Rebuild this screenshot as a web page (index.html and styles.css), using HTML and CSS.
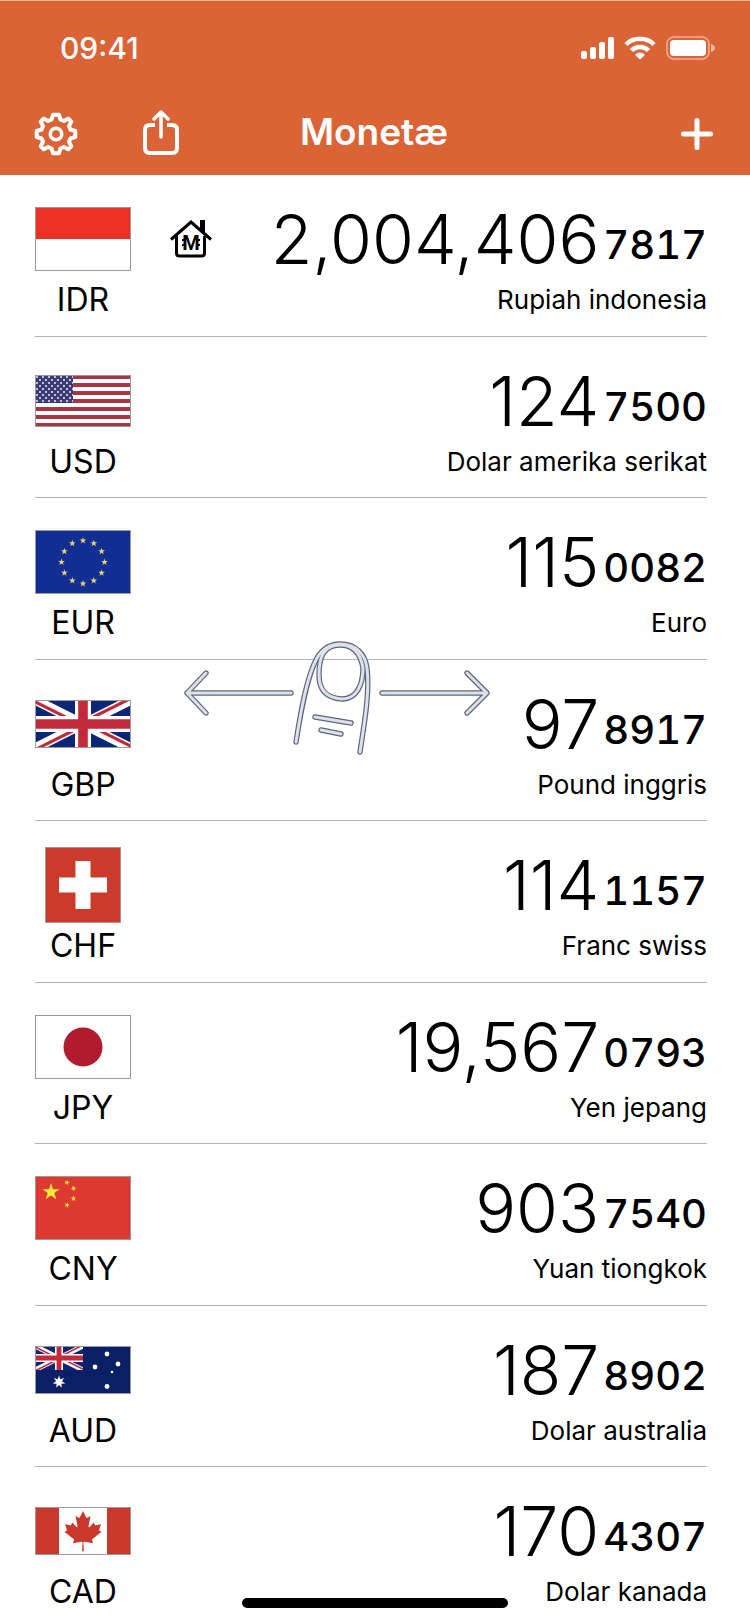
FILE: index.html
```html
<!DOCTYPE html>
<html lang="id">
<head>
    <meta charset="UTF-8">
    <meta name="viewport" content="width=device-width, initial-scale=1.0">
    <title>Monetæ</title>
    <link rel="stylesheet" href="styles.css">
</head>
<body>
    <!-- shared flag parts -->
    <svg class="defs" aria-hidden="true">
        <defs>
            <path id="star" d="M0-10 2.25-3.09 9.51-3.09 3.63 1.18 5.88 8.09 0 3.82-5.88 8.09-3.63 1.18-9.51-3.09-2.25-3.09z"/>
            <symbol id="jack" viewBox="0 0 60 30">
                <clipPath id="jack-clip"><path d="M30 15h30v15zv15H0zH0V0zV0h30z"/></clipPath>
                <path fill="#0b2677" d="M0 0h60v30H0z"/>
                <path stroke="#fff" stroke-width="6" d="M0 0l60 30M60 0L0 30"/>
                <path stroke="#c22a3c" stroke-width="4" clip-path="url(#jack-clip)" d="M0 0l60 30M60 0L0 30"/>
                <path stroke="#fff" stroke-width="10" d="M30 0v30M0 15h60"/>
                <path stroke="#c22a3c" stroke-width="6" d="M30 0v30M0 15h60"/>
            </symbol>
            <pattern id="us-stars" width="6" height="6" patternUnits="userSpaceOnUse">
                <circle cx="2" cy="2" r="0.9" fill="#fff"/>
                <circle cx="5" cy="5" r="0.9" fill="#fff"/>
            </pattern>
        </defs>
    </svg>

    <header class="header">
        <div class="status-bar">
            <span class="time">09:41</span>
            <div class="status-icons">
                <svg width="34" height="24" viewBox="0 0 34 24" fill="#fff">
                    <rect x="1" y="15" width="6" height="8" rx="2"/>
                    <rect x="10" y="11" width="6" height="12" rx="2"/>
                    <rect x="19" y="6" width="6" height="17" rx="2"/>
                    <rect x="28" y="1" width="6" height="22" rx="2"/>
                </svg>
                <svg width="32" height="24" viewBox="0 0 32 24" fill="none" stroke="#fff" stroke-width="4.5">
                    <path d="M2 8.500a20 20 0 0 1 28 0"/>
                    <path d="M7.500 14.500a12 12 0 0 1 17 0"/>
                    <path fill="#fff" stroke="none" d="M11.500 18.300a6.500 6.500 0 0 1 9 0q.4.500 0 1L16.700 23q-.7.500-1.400 0l-3.800-3.700q-.4-.500 0-1z"/>
                </svg>
                <svg class="battery" width="50" height="24" viewBox="0 0 50 24">
                    <rect x="1" y="1" width="42" height="22" rx="7" fill="none" stroke="#efb198" stroke-width="1.500"/>
                    <rect x="4" y="4" width="36" height="16" rx="4" fill="#fff"/>
                    <path fill="#efb198" d="M45 8q4 1.500 4 4t-4 4z"/>
                </svg>
            </div>
        </div>
        <nav class="nav-bar">
            <div class="nav-left">
                <button class="icon-btn" type="button" aria-label="Pengaturan">
                    <svg width="44" height="44" viewBox="-22 -22 44 44" fill="none" stroke="#fff" stroke-width="4" stroke-linejoin="round">
                        <path d="M-4.400-14.500-3-19.300H3L4.400-14.500 7.800-13 12.300-15.300 15.300-12.300 13-7.800 14.500-4.400 19.300-3V3L14.500 4.400 13 7.800 15.300 12.300 12.300 15.300 7.800 13 4.400 14.500 3 19.300H-3L-4.400 14.500-7.800 13-12.300 15.300-15.300 12.300-13 7.800-14.500 4.400-19.300 3V-3L-14.500-4.400-13-7.800-15.300-12.300-12.300-15.300-7.800-13z"/>
                        <circle r="5.800" stroke-width="3.500"/>
                    </svg>
                </button>
                <button class="icon-btn" type="button" aria-label="Bagikan">
                    <svg width="38" height="48" viewBox="0 0 38 48" fill="none" stroke="#fff" stroke-width="4" stroke-linecap="round">
                        <path stroke-linecap="butt" d="M13 15H8q-5 0-5 5v18q0 5 5 5h22q5 0 5-5V20q0-5-5-5h-5"/>
                        <path stroke-width="3.500" stroke-linejoin="round" d="M19 27V2M12 9l7-7 7 7"/>
                    </svg>
                </button>
            </div>
            <h1 class="title">Monetæ</h1>
            <div class="nav-right">
                <button class="icon-btn" type="button" aria-label="Tambah">
                    <svg width="34" height="34" viewBox="0 0 34 34" stroke="#fff" stroke-width="5" stroke-linecap="round">
                        <path d="M17 3.500v27M3.500 17h27"/>
                    </svg>
                </button>
            </div>
        </nav>
    </header>

    <main class="content">
        <ul class="rates">
            <li class="rate">
                <svg class="flag" width="96" height="64" viewBox="0 0 96 64">
                    <path fill="#fff" d="M0 0h96v64H0z"/>
                    <path fill="#ec3124" d="M0 0h96v32H0z"/>
                </svg>
                <svg class="home" width="42" height="40" viewBox="0 0 42 40" fill="none" stroke="#000" stroke-width="3">
                    <path d="M30 1h5v14l-5-5z" fill="#000" stroke="none"/>
                    <path d="M1 20.500 21 3l20 17.500"/>
                    <path d="M6.500 17v17q0 3 3 3h22q3 0 3-3V17"/>
                    <path stroke-width="2" d="M12 21h4M12 26h4M26 21h4M26 26h4"/>
                    <text class="home-mark" x="21" y="31" text-anchor="middle">M</text>
                </svg>
                <div class="amount"><span class="whole">2,004,406</span><span class="fraction">7817</span></div>
                <span class="code">IDR</span>
                <span class="name">Rupiah indonesia</span>
            </li>
            <li class="rate">
                <svg class="flag" width="96" height="52" viewBox="0 0 96 52">
                    <path fill="#fff" d="M0 0h96v52H0z"/>
                    <path stroke="#a83543" stroke-width="4" d="M0 2h96M0 10h96M0 18h96M0 26h96M0 34h96M0 42h96M0 50h96"/>
                    <path fill="#3b3b76" d="M0 0h38v28H0z"/>
                    <path fill="url(#us-stars)" d="M0 1h38v26H0z"/>
                </svg>
                <div class="amount"><span class="whole">124</span><span class="fraction">7500</span></div>
                <span class="code">USD</span>
                <span class="name">Dolar amerika serikat</span>
            </li>
            <li class="rate">
                <svg class="flag" width="96" height="64" viewBox="0 0 96 64">
                    <path fill="#112e94" d="M0 0h96v64H0z"/>
                    <g fill="#eed567">
                        <use href="#star" transform="translate(48 10.500) scale(.36)"/>
                        <use href="#star" transform="translate(58.800 13.400) scale(.36)"/>
                        <use href="#star" transform="translate(66.600 21.300) scale(.36)"/>
                        <use href="#star" transform="translate(69.500 32) scale(.36)"/>
                        <use href="#star" transform="translate(66.600 42.800) scale(.36)"/>
                        <use href="#star" transform="translate(58.800 50.600) scale(.36)"/>
                        <use href="#star" transform="translate(48 53.500) scale(.36)"/>
                        <use href="#star" transform="translate(37.300 50.600) scale(.36)"/>
                        <use href="#star" transform="translate(29.400 42.800) scale(.36)"/>
                        <use href="#star" transform="translate(26.500 32) scale(.36)"/>
                        <use href="#star" transform="translate(29.400 21.300) scale(.36)"/>
                        <use href="#star" transform="translate(37.300 13.400) scale(.36)"/>
                    </g>
                </svg>
                <div class="amount"><span class="whole">115</span><span class="fraction">0082</span></div>
                <span class="code">EUR</span>
                <span class="name">Euro</span>
            </li>
            <li class="rate">
                <svg class="flag" width="96" height="48" viewBox="0 0 96 48">
                    <use href="#jack" width="96" height="48"/>
                </svg>
                <div class="amount"><span class="whole">97</span><span class="fraction">8917</span></div>
                <span class="code">GBP</span>
                <span class="name">Pound inggris</span>
            </li>
            <li class="rate">
                <svg class="flag" width="76" height="76" viewBox="0 0 76 76">
                    <path fill="#cb3a2a" d="M0 0h76v76H0z"/>
                    <path stroke="#fff" stroke-width="15" d="M38 14v48M14 38h48"/>
                </svg>
                <div class="amount"><span class="whole">114</span><span class="fraction">1157</span></div>
                <span class="code">CHF</span>
                <span class="name">Franc swiss</span>
            </li>
            <li class="rate">
                <svg class="flag" width="96" height="64" viewBox="0 0 96 64">
                    <path fill="#fff" d="M0 0h96v64H0z"/>
                    <circle cx="48" cy="32" r="19.500" fill="#b01c2e"/>
                </svg>
                <div class="amount"><span class="whole">19,567</span><span class="fraction">0793</span></div>
                <span class="code">JPY</span>
                <span class="name">Yen jepang</span>
            </li>
            <li class="rate">
                <svg class="flag" width="96" height="64" viewBox="0 0 96 64">
                    <path fill="#dd3831" d="M0 0h96v64H0z"/>
                    <g fill="#fbe93c">
                        <use href="#star" transform="translate(16 16) scale(.9)"/>
                        <use href="#star" transform="translate(32 6.500) rotate(20) scale(.3)"/>
                        <use href="#star" transform="translate(38.500 12.500) rotate(45) scale(.3)"/>
                        <use href="#star" transform="translate(38.500 22.500) scale(.3)"/>
                        <use href="#star" transform="translate(32 29) rotate(20) scale(.3)"/>
                    </g>
                </svg>
                <div class="amount"><span class="whole">903</span><span class="fraction">7540</span></div>
                <span class="code">CNY</span>
                <span class="name">Yuan tiongkok</span>
            </li>
            <li class="rate">
                <svg class="flag" width="96" height="48" viewBox="0 0 96 48">
                    <path fill="#0a1f66" d="M0 0h96v48H0z"/>
                    <use href="#jack" width="48" height="24"/>
                    <g fill="#fff">
                        <path transform="translate(24 36)" d="M0-6.500 1.300-2.700 5.080-4.050 2.920-.67 6.340 1.450 2.350 1.870 2.820 5.860 0 3-2.820 5.860-2.350 1.870-6.340 1.450-2.920-.67-5.080-4.050-1.300-2.700z"/>
                        <circle cx="72" cy="8" r="2.400"/>
                        <circle cx="60" cy="21" r="2.400"/>
                        <circle cx="83" cy="18" r="2.400"/>
                        <circle cx="72" cy="40.500" r="2.400"/>
                        <circle cx="77" cy="26" r="1.300"/>
                    </g>
                </svg>
                <div class="amount"><span class="whole">187</span><span class="fraction">8902</span></div>
                <span class="code">AUD</span>
                <span class="name">Dolar australia</span>
            </li>
            <li class="rate">
                <svg class="flag" width="96" height="48" viewBox="-4800 -2400 9600 4800">
                    <path fill="#fff" d="M-4800-2400h9600v4800h-9600z"/>
                    <path fill="#c8392b" d="M-4800-2400h2400v4800h-2400zM2400-2400h2400v4800H2400z"/>
                    <path fill="#c8392b" d="m-90 2030 45-863a95 95 0 0 0-111-98l-859 151 116-320a65 65 0 0 0-20-73l-941-762 212-99a65 65 0 0 0 34-79l-186-572 542 115a65 65 0 0 0 73-38l105-247 423 454a65 65 0 0 0 111-57l-204-1052 327 189a65 65 0 0 0 91-27l332-652 332 652a65 65 0 0 0 91 27l327-189-204 1052a65 65 0 0 0 111 57l423-454 105 247a65 65 0 0 0 73 38l542-115-186 572a65 65 0 0 0 34 79l212 99-941 762a65 65 0 0 0-20 73l116 320-859-151a95 95 0 0 0-111 98l45 863z"/>
                </svg>
                <div class="amount"><span class="whole">170</span><span class="fraction">4307</span></div>
                <span class="code">CAD</span>
                <span class="name">Dolar kanada</span>
            </li>
        </ul>

        <!-- swipe hint: outline below, fill on top -->
        <svg class="swipe-hint" width="340" height="150" viewBox="0 0 340 150" aria-hidden="true">
            <defs>
                <g id="swipe" fill="none" stroke-linecap="round" stroke-linejoin="round">
                    <path d="M121 73H17M36 53 17 73l19 20"/>
                    <path d="M212 73h105M297 53l20 20-20 20"/>
                    <path d="M126 122C131 90 137 56 147 38 153 28 161 24 170 24 186 24 195 34 197 48 200 73 194 105 190 132"/>
                    <path d="M170 25C185 25 191 36 193 48 193 66 186 79 172 79 156 78 149 70 149 55 149 40 152 25 170 25z"/>
                    <path d="M145 97 181 103M151 110 171 114"/>
                </g>
            </defs>
            <use href="#swipe" stroke="#5f6678" stroke-width="5.400"/>
            <use href="#swipe" stroke="#dce1eb" stroke-width="3"/>
        </svg>
    </main>

    <div class="home-indicator"></div>
</body>
</html>
```
FILE: styles.css
```css
* {
    box-sizing: border-box;
}
body {
    margin: 0;
    background-color: #fff;
    color: #000;
    font-family: Inter, "Liberation Sans", sans-serif;
    overflow-x: hidden;
}
.defs {
    position: absolute;
    width: 0;
    height: 0;
}
svg {
    display: block;
}

/* header */
.header {
    background-color: #db6437;
    border-top: 1px solid #f3b48f;
    color: #fff;
}
.status-bar {
    display: flex;
    justify-content: space-between;
    align-items: center;
    height: 94px;
    padding: 0 34px 0 60px;
}
.time {
    font-size: 30px;
    font-weight: 500;
}
.status-icons {
    display: flex;
    align-items: center;
    gap: 10px;
}
.nav-bar {
    display: grid;
    grid-template-columns: 1fr auto 1fr;
    align-items: center;
    height: 80px;
    padding: 0 36px 3px 34px;
}
.nav-left {
    display: flex;
    align-items: center;
    gap: 64px;
}
.nav-right {
    display: flex;
    justify-content: flex-end;
}
.icon-btn {
    padding: 0;
    border: none;
    background: none;
    cursor: pointer;
}
.title {
    margin: 0;
    padding-bottom: 5px;
    font-size: 37px;
    font-weight: 600;
}

/* list of currencies */
.content {
    position: relative;
}
.rates {
    margin: 0;
    padding: 0 43px 0 35px;
    list-style: none;
}
.rate {
    display: grid;
    grid-template-columns: 96px 42px 1fr;
    grid-template-rows: 80px 42px;
    column-gap: 39px;
    align-items: center;
    min-height: 162px;
    padding-top: 24px;
    align-content: start;
    border-bottom: 1px solid #b4b4b4;
}
.rate:nth-child(even) {
    min-height: 161px;
}
.rate:last-child {
    min-height: 0;
    border-bottom: none;
}
.flag {
    grid-column: 1;
    grid-row: 1;
    justify-self: center;
    outline: 1px solid #9a9a9a;
    outline-offset: -1px;
}
.home {
    grid-column: 2;
    grid-row: 1;
}
.home-mark {
    font-family: Roboto, sans-serif;
    font-size: 20px;
    font-weight: 700;
    fill: #000;
    stroke: none;
}
.amount {
    grid-column: 2 / 4;
    grid-row: 1;
    justify-self: end;
    display: flex;
    align-items: flex-end;
    gap: 4px;
}
.whole {
    font-size: 68px;
    font-weight: 300;
    line-height: 80px;
}
.fraction {
    font-size: 40px;
    font-weight: 500;
    font-variant-numeric: tabular-nums;
    line-height: 68px;
}
.code {
    grid-column: 1;
    grid-row: 2;
    text-align: center;
    font-size: 32px;
    line-height: 42px;
}
.name {
    grid-column: 2 / 4;
    grid-row: 2;
    text-align: right;
    font-size: 26px;
    line-height: 42px;
}

/* overlays */
.swipe-hint {
    position: absolute;
    top: 445px;
    left: 170px;
}
.home-indicator {
    position: fixed;
    bottom: 16px;
    left: 50%;
    width: 266px;
    height: 10px;
    margin-left: -133px;
    border-radius: 5px;
    background-color: #000;
}
```
